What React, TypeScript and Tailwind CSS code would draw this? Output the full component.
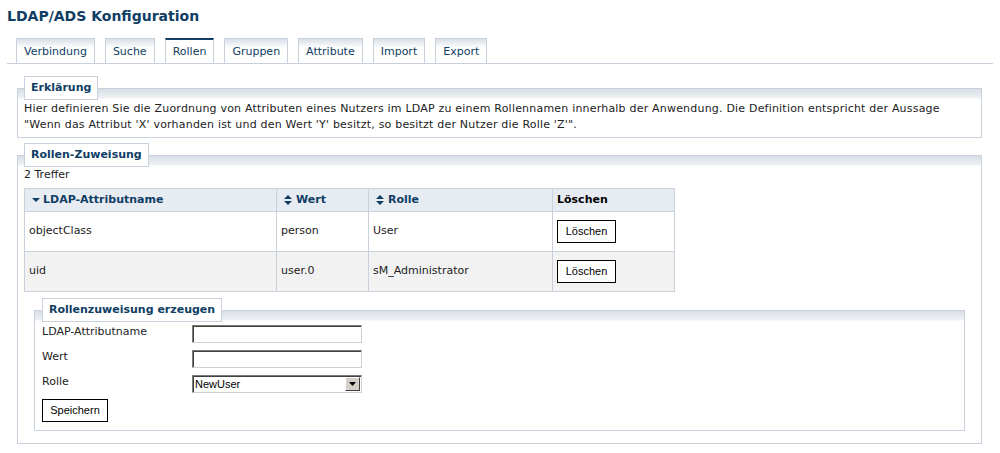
import React from "react";

const BLUE = "text-[#0f3d64]";

const tabs = ["Verbindung", "Suche", "Rollen", "Gruppen", "Attribute", "Import", "Export"];

const rows = [
  { attr: "objectClass", wert: "person", rolle: "User" },
  { attr: "uid", wert: "user.0", rolle: "sM_Administrator" },
];

function SortDown() {
  return (
    <svg width="8" height="6" viewBox="0 0 8 6" className="shrink-0">
      <path d="M0 1h8L4 5z" fill="#0f3d64" />
    </svg>
  );
}

function SortBoth() {
  return (
    <svg width="8" height="10" viewBox="0 0 8 10" className="shrink-0">
      <path d="M4 0l4 4H0z M0 6h8l-4 4z" fill="#0f3d64" />
    </svg>
  );
}

function Box({
  title,
  className = "",
  children,
}: {
  title: string;
  className?: string;
  children: React.ReactNode;
}) {
  return (
    <fieldset
      className={`border border-[#c9d2dc] bg-[linear-gradient(#d9dfe7,#eef1f4_9px,#fff_10px)] ${className}`}
    >
      <legend
        className={`border border-[#c9d2dc] bg-white px-[6px] py-[4px] text-[11px] font-bold leading-[14px] ${BLUE}`}
      >
        {title}
      </legend>
      {children}
    </fieldset>
  );
}

function Inset({ children }: { children?: React.ReactNode }) {
  return (
    <div className="flex h-[18px] w-[170px] items-center border border-[#d4d0c8] border-l-[#7a7a7a] border-t-[#7a7a7a] bg-white shadow-[inset_1px_1px_0_#404040]">
      {children}
    </div>
  );
}

function WinButton({ label, className = "" }: { label: string; className?: string }) {
  return (
    <button
      className={`h-[23px] border border-black bg-white font-['Liberation_Sans',Arial,sans-serif] text-[11px] text-black ${className}`}
    >
      {label}
    </button>
  );
}

export default function App() {
  return (
    <div className="min-h-[453px] bg-white px-[7px] font-['DejaVu_Sans',Verdana,sans-serif] text-[11px] text-[#222]">
      <h1 className={`pt-[6px] text-[14px] font-bold leading-[20px] ${BLUE}`}>LDAP/ADS Konfiguration</h1>

      {/* Tabs */}
      <div className="mt-[12px] flex gap-[10px] border-b border-[#c9d2dc] pl-[9px]">
        {tabs.map((t) => (
          <div
            key={t}
            className={`flex h-[25px] items-center border border-b-0 border-[#c9d2dc] px-[7px] pt-[2px] ${BLUE} ${
              t === "Rollen"
                ? "border-t-2 border-t-[#0f3d64] bg-white"
                : "bg-[linear-gradient(#d9dfe7,#fff_9px)]"
            }`}
          >
            {t}
          </div>
        ))}
      </div>

      {/* Erklärung */}
      <Box title="Erklärung" className="ml-[10px] mr-[11px] mt-[12px] px-[6px] pb-[4px]">
        <p className="pt-[1px] leading-[16px] tracking-[0.2px]">
          Hier definieren Sie die Zuordnung von Attributen eines Nutzers im LDAP zu einem Rollennamen
          innerhalb der Anwendung. Die Definition entspricht der Aussage
          <br />
          "Wenn das Attribut 'X' vorhanden ist und den Wert 'Y' besitzt, so besitzt der Nutzer die
          Rolle 'Z'".
        </p>
      </Box>

      {/* Rollen-Zuweisung */}
      <Box title="Rollen-Zuweisung" className="ml-[10px] mr-[11px] mt-[5px] px-[6px] pb-[12px]">
        <div className="leading-[16px]">2 Treffer</div>
        <table className="mt-[5px] w-[650px] table-fixed border-collapse">
          <colgroup>
            <col className="w-[252px]" />
            <col className="w-[92px]" />
            <col className="w-[184px]" />
            <col className="w-[122px]" />
          </colgroup>
          <thead>
            <tr className="h-[23px] bg-[#e7ecf2]">
              <th className="border border-[#c9d2dc] px-[4px] text-left font-bold">
                <span className={`flex items-center gap-[3px] pl-[3px] ${BLUE}`}>
                  <SortDown />
                  LDAP-Attributname
                </span>
              </th>
              <th className="border border-[#c9d2dc] px-[4px] text-left font-bold">
                <span className={`flex items-center gap-[4px] pl-[3px] ${BLUE}`}>
                  <SortBoth />
                  Wert
                </span>
              </th>
              <th className="border border-[#c9d2dc] px-[4px] text-left font-bold">
                <span className={`flex items-center gap-[4px] pl-[3px] ${BLUE}`}>
                  <SortBoth />
                  Rolle
                </span>
              </th>
              <th className="border border-[#c9d2dc] px-[4px] text-left font-bold text-black">
                Löschen
              </th>
            </tr>
          </thead>
          <tbody>
            {rows.map((r, i) => (
              <tr key={r.attr} className={`h-[40px] ${i % 2 ? "bg-[#f2f2f2]" : "bg-white"}`}>
                <td className="border border-[#c9d2dc] px-[4px]">{r.attr}</td>
                <td className="border border-[#c9d2dc] px-[4px]">{r.wert}</td>
                <td className="border border-[#c9d2dc] px-[4px]">{r.rolle}</td>
                <td className="border border-[#c9d2dc] px-[4px]">
                  <WinButton label="Löschen" className="w-[59px]" />
                </td>
              </tr>
            ))}
          </tbody>
        </table>

        {/* Rollenzuweisung erzeugen */}
        <Box title="Rollenzuweisung erzeugen" className="mx-[10px] mt-[6px] px-[7px] pb-[8px]">
          <div className="mt-[3px] grid grid-cols-[150px_170px] gap-y-[7px]">
            <div className="leading-[14px]">LDAP-Attributname</div>
            <Inset />
            <div className="leading-[14px]">Wert</div>
            <Inset />
            <div className="leading-[14px]">Rolle</div>
            <Inset>
              <span className="flex-1 pl-[2px] font-['Liberation_Sans',Arial,sans-serif] text-[11px] text-black">
                NewUser
              </span>
              <span className="mr-px flex h-[14px] w-[15px] items-center justify-center border border-[#fff] border-b-[#404040] border-r-[#404040] bg-[#d4d0c8]">
                <svg width="7" height="4" viewBox="0 0 7 4">
                  <path d="M0 0h7L3.5 4z" fill="#000" />
                </svg>
              </span>
            </Inset>
          </div>
          <WinButton label="Speichern" className="mt-[6px] w-[66px]" />
        </Box>
      </Box>
    </div>
  );
}
